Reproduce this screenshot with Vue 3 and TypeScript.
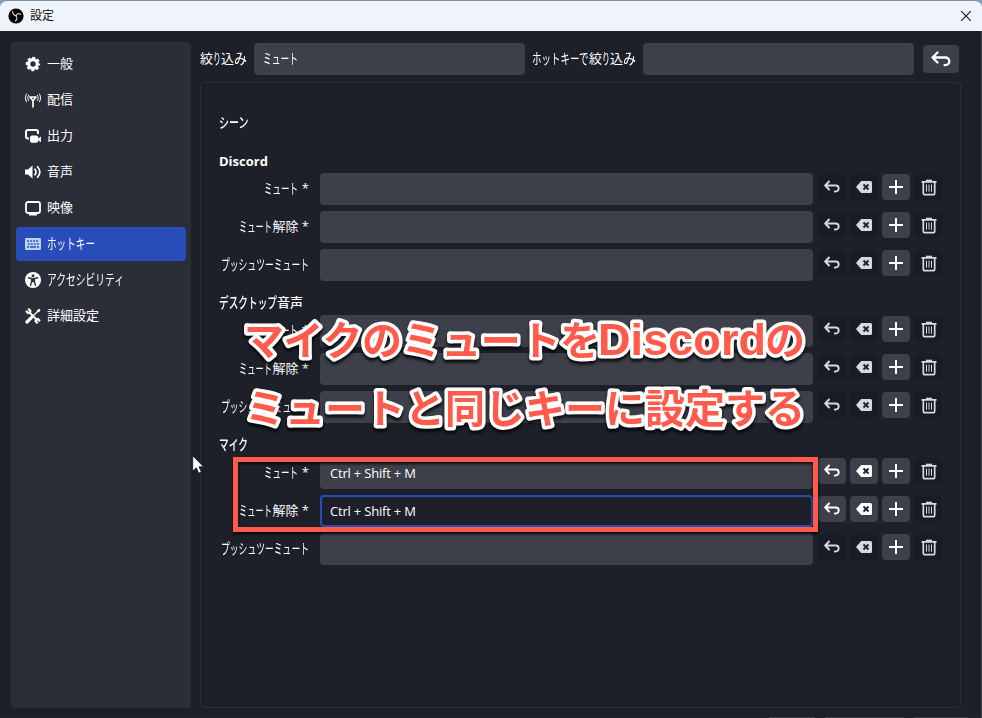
<script setup lang="ts">
import { defineComponent, h, type PropType } from 'vue'

// A run of text: with a width, the glyphs are condensed to fill exactly that width.
type Run = [text: string, width?: number]

const Condensed = defineComponent({
  props: {
    runs: { type: Array as PropType<Run[]>, required: true },
    size: { type: Number, default: 13 },
  },
  setup(props) {
    return () =>
      h(
        'span',
        { class: 'runs' },
        props.runs.map(([text, width]) =>
          width === undefined
            ? h('span', { class: 'run' }, text)
            : h('span', { class: 'run', style: { width: `${width}px` } }, [
                h(
                  'span',
                  { class: 'squeeze', style: { transform: `scale(${width / (text.length * props.size)}, 1.12)` } },
                  text,
                ),
              ]),
        ),
      )
  },
})

interface NavItem { icon: string; label: Run[]; active?: boolean }
const nav: NavItem[] = [
  { icon: 'gear', label: [['一般']] },
  { icon: 'antenna', label: [['配信']] },
  { icon: 'output', label: [['出力']] },
  { icon: 'audio', label: [['音声']] },
  { icon: 'video', label: [['映像']] },
  { icon: 'keyboard', label: [['ホットキー', 48]], active: true },
  { icon: 'access', label: [['アクセシビリティ', 78]] },
  { icon: 'tools', label: [['詳細設定']] },
]

interface Row { label: Run[]; value?: string; focused?: boolean }
interface Group { title: Run[]; rows: Row[] }
const mute: Run[] = [['ミュート', 34], ['\u00a0*']]
const unmute: Run[] = [['ミュート', 33], ['解除\u00a0*']]
const push: Run[] = [['プッシュツーミュート', 88]]

const groups: Group[] = [
  { title: [['Discord']], rows: [{ label: mute }, { label: unmute }, { label: push }] },
  { title: [['デスクトップ', 58], ['音声']], rows: [{ label: mute }, { label: unmute }, { label: push }] },
  {
    title: [['マイク', 29]],
    rows: [
      { label: mute, value: 'Ctrl + Shift + M' },
      { label: unmute, value: 'Ctrl + Shift + M', focused: true },
      { label: push },
    ],
  },
]
</script>

<template>
  <div class="window">
    <header class="titlebar">
      <svg class="logo" viewBox="0 0 16 16">
        <circle cx="8" cy="8" r="7.600" fill="#000" />
        <g fill="none" stroke="#d5d9e0" stroke-width="1.100" stroke-linecap="round">
          <path d="M4.600 3.200c.1 2.500 1.300 4.100 3.400 4.600" />
          <path d="M12.700 6.200c-2-1.200-3.700-.6-4.700 1.600" />
          <path d="M7.300 13c2-1.300 2.100-3.200.7-5.200" />
        </g>
      </svg>
      <span class="title">設定</span>
      <svg class="close" viewBox="0 0 12 12"><path d="M1.200 1.200l9.600 9.600M10.800 1.200l-9.600 9.600" /></svg>
    </header>

    <div class="body">
      <nav class="sidebar">
        <div v-for="item in nav" :key="item.icon" class="item" :class="{ active: item.active }">
          <svg class="nav-icon" viewBox="0 0 16 16">
            <g v-if="item.icon === 'gear'">
              <circle cx="8" cy="8" r="4.300" fill="none" stroke="#fff" stroke-width="3.200" />
              <circle cx="8" cy="8" r="6.100" fill="none" stroke="#fff" stroke-width="2.200" stroke-dasharray="2.800 1.990" stroke-dashoffset="1.400" />
            </g>
            <g v-else-if="item.icon === 'antenna'" fill="none" stroke="#fff" stroke-linecap="round">
              <path d="M5 5h6L8 8.800zM8 8.500v6.300" stroke-width="1.700" stroke-linejoin="round" />
              <path d="M3.600 3.200c-1.100 1.700-1.100 3.700 0 5.400M12.400 3.200c1.100 1.700 1.100 3.700 0 5.400M1.500 2C.1 4.500.1 7.300 1.500 9.800M14.500 2c1.400 2.500 1.400 5.300 0 7.800" stroke-width="1" />
            </g>
            <g v-else-if="item.icon === 'output'">
              <path d="M4 10.500H3A2 2 0 0 1 1 8.500V4a2 2 0 0 1 2-2h8a2 2 0 0 1 2 2v2" fill="none" stroke="#fff" stroke-width="2" />
              <rect x="5" y="7.500" width="8.200" height="7.300" rx="2" fill="#fff" />
              <path d="M12.500 11l3.500-2.500v5.800L12.500 12z" fill="#fff" />
            </g>
            <g v-else-if="item.icon === 'audio'">
              <path d="M0 5.500h3L7.500 1.500v13L3 10.500H0z" fill="#fff" />
              <path d="M10 5.200c1.300 1.800 1.300 3.800 0 5.600M12.500 2.800c2.900 3.200 2.900 7.200 0 10.400" fill="none" stroke="#fff" stroke-width="1.700" stroke-linecap="round" />
            </g>
            <g v-else-if="item.icon === 'video'">
              <rect x="1" y="2" width="14" height="11" rx="2" fill="none" stroke="#fff" stroke-width="1.800" />
              <path d="M4 14h8v1.500H4z" fill="#fff" />
            </g>
            <g v-else-if="item.icon === 'keyboard'">
              <rect x="0" y="2" width="16" height="12" rx="1" fill="#b9d3fb" />
              <path d="M2 5h12M3 8h11" fill="none" stroke="#284cb8" stroke-width="1.700" stroke-dasharray="1.800 1.200" />
              <path d="M2 11h2M5 11h6M12 11h2" fill="none" stroke="#284cb8" stroke-width="1.500" />
            </g>
            <g v-else-if="item.icon === 'access'">
              <circle cx="8" cy="8" r="8" fill="#fff" />
              <circle cx="8" cy="3.700" r="1.500" fill="#2b2d38" />
              <path d="M3.500 5.800L6.600 6.600v3L5.500 13.300M12.500 5.800L9.400 6.600v3l1.100 3.700" fill="none" stroke="#2b2d38" stroke-width="1.400" stroke-linecap="round" />
              <path d="M6.200 6h3.600v4.200H6.200z" fill="#2b2d38" />
            </g>
            <g v-else fill="none" stroke="#fff">
              <path d="M4.500 4.500l8 8" stroke-width="2" />
              <path d="M1 2.900l2.200 2.100 1.800-.400.400-1.800L3.300.7M15 13.100l-2.200-2.100-1.800.400-.400 1.800 2.100 2.100" stroke-width="2.200" />
              <path d="M14.800 1.200L6.500 9.500" stroke-width="1.300" />
              <path d="M13.600 1.200l1.500 1.500-1.600 1.200-1-1z" fill="#fff" stroke-width=".8" />
              <path d="M6.600 9.400L2 14" stroke-width="3.200" stroke-linecap="round" />
            </g>
          </svg>
          <Condensed :runs="item.label" />
        </div>
      </nav>

      <main class="content">
        <div class="filters">
          <Condensed class="f1" :runs="[['絞'], ['り', 8], ['込'], ['み', 13]]" />
          <div class="field"><Condensed :runs="[['ミュート', 35]]" /></div>
          <Condensed class="f2" :runs="[['ホットキーで', 57], ['絞'], ['り', 8], ['込'], ['み', 13]]" />
          <div class="field"></div>
          <button class="reset">
            <svg viewBox="0 0 20 16"><path d="M6.500 1.500L1.500 6.500l5 5M2 6.500h12.500a3.800 3.800 0 0 1 0 7.600H13.500" /></svg>
          </button>
        </div>

        <section class="panel">
          <h2 class="scene"><Condensed :runs="[['シーン', 30]]" /></h2>
          <div v-for="(group, g) in groups" :key="g" class="group">
            <h3><Condensed :runs="group.title" /></h3>
            <div v-for="(row, r) in group.rows" :key="r" class="row">
              <Condensed class="label" :runs="row.label" />
              <div class="key" :class="{ focused: row.focused }">{{ row.value }}</div>
              <div class="actions">
                <button :class="{ off: !row.value }">
                  <svg viewBox="0 0 16 16"><path class="line" d="M5 2.500L1.200 6.500 5 10.500M1.500 6.500h10.200a3 3 0 0 1 0 6H10.800" /></svg>
                </button>
                <button :class="{ off: !row.value }">
                  <svg viewBox="0 0 16 16">
                    <path class="solid" d="M5.200 2H14.500a1.500 1.500 0 0 1 1.500 1.500v9a1.500 1.500 0 0 1-1.500 1.500H5.200L0 8z" />
                    <path class="cross" d="M7.500 5.500l5 5M12.500 5.500l-5 5" />
                  </svg>
                </button>
                <button>
                  <svg viewBox="0 0 16 16"><path class="line square" d="M8 1v14M1 8h14" /></svg>
                </button>
                <button class="off">
                  <svg class="bin" viewBox="0 0 16 16">
                    <path class="line trash" d="M.5 2.400h15M2.300 3v10.500a1.700 1.700 0 0 0 1.700 1.700h8a1.700 1.700 0 0 0 1.700-1.700V3" />
                    <path class="solid" d="M5 .2h6v2H5z" />
                    <path class="line ribs" d="M5.500 5v7.200M8 5v7.200M10.500 5v7.200" />
                  </svg>
                </button>
              </div>
            </div>
          </div>
        </section>
      </main>
    </div>

    <footer class="bottom"><i class="b1"></i><i class="b2"></i><i class="b3"></i></footer>

    <div class="edge"></div>
    <div class="highlight"></div>
    <svg class="caption" viewBox="0 0 982 718">
      <text x="244" y="355" textLength="356">マイクのミュートを</text>
      <text class="latin" x="598" y="355" textLength="168">Discord</text>
      <text x="765" y="355">の</text>
      <text x="245" y="422.500" textLength="560">ミュートと同じキーに設定する</text>
    </svg>
    <svg class="cursor" viewBox="0 0 12 19">
      <path d="M.7.8v15.400l3.600-3.400 2.400 5.400 2.700-1.200-2.400-5.200h4.600z" />
    </svg>
  </div>
</template>

<style>
body { margin: 0; overflow: hidden; }
.runs { display: inline-flex; align-items: center; padding-bottom: 1.5px; white-space: nowrap; }
.run { display: block; flex: none; }
.squeeze { display: block; width: max-content; transform-origin: 0 50%; }
</style>

<style scoped>
.window {
  position: relative;
  display: flex;
  flex-direction: column;
  box-sizing: border-box;
  width: 982px;
  height: 718px;
  overflow: hidden;
  background: linear-gradient(#7f9fc0 8px, #1e2029 8px);
  color: #fff;
  font: 13px/18px 'Open Sans', 'Noto Sans CJK JP', sans-serif;
}
.titlebar {
  display: flex;
  align-items: center;
  box-sizing: border-box;
  height: 31px;
  padding: 0 10px 0 8px;
  border-top: 1px solid #7b8fa8;
  border-radius: 7px 7px 0 0;
  background: #eff3fa;
  color: #111;
}
.logo { width: 16px; height: 16px; margin-right: 6px; }
.title { font-size: 12px; }
.close { width: 12px; height: 12px; margin-left: auto; fill: none; stroke: #111; stroke-width: 1.1; }
.body { display: flex; flex: 1; gap: 9px; padding: 11px 21px 9px 11px; }
.sidebar {
  display: flex;
  flex-direction: column;
  gap: 2px;
  box-sizing: border-box;
  width: 180px;
  padding: 5px;
  border-radius: 4px;
  background: #2b2d38;
}
.item { display: flex; align-items: center; gap: 6px; height: 34px; padding-left: 9px; border-radius: 4px; }
.item.active { background: #284cb8; }
.nav-icon { width: 16px; height: 16px; }
.content { display: flex; flex: 1; flex-direction: column; }
.filters { display: flex; align-items: center; height: 32px; margin: 1px 0 7px; }
.f1 { width: 54px; }
.f2 { width: 111px; margin-left: 7px; }
.field {
  display: flex;
  align-items: center;
  box-sizing: border-box;
  width: 271px;
  height: 32px;
  padding-left: 9px;
  border-radius: 4px;
  background: #3d404a;
}
button {
  display: flex;
  align-items: center;
  justify-content: center;
  width: 28px;
  height: 26px;
  padding: 0;
  border: 0;
  border-radius: 4px;
  background: #3d404a;
  color: #fff;
}
.reset { width: 36px; height: 28px; margin-left: 9px; }
.reset svg { width: 20px; height: 16px; fill: none; stroke: #fff; stroke-width: 2.3; stroke-linecap: round; stroke-linejoin: round; }
.panel { flex: 1; box-sizing: border-box; padding: 28px 18px 0; border: 1px solid #2b2d38; border-radius: 4px; }
h2, h3 { display: flex; align-items: center; margin: 0; font-size: 13px; font-weight: 700; }
.scene { height: 24px; margin-bottom: 10px; font-weight: 500; }
.group h3 { box-sizing: border-box; height: 28px; padding-top: 5px; }
.group + .group h3 { padding-top: 4px; font-weight: 500; }
.row { display: flex; height: 32px; margin-bottom: 6px; }
.label { justify-content: flex-end; width: 90px; margin-right: 11px; }
.key {
  box-sizing: border-box;
  width: 493px;
  height: 32px;
  padding: 6px 8px;
  border: 2px solid #3d404a;
  border-radius: 4px;
  background: #3d404a;
  line-height: 17px;
  letter-spacing: -0.2px;
}
.key.focused { border-color: #284cb8; background: #1e2029; }
.actions { display: flex; gap: 4px; margin: 1px 0 0 5px; }
.actions button.off { background: #191b26; color: #d5d9e5; }
.actions svg { width: 16px; height: 16px; }
.actions .bin { width: 16px; height: 17px; margin-left: 1px; }
.line { fill: none; stroke: currentColor; stroke-width: 1.9; stroke-linecap: round; stroke-linejoin: round; }
.square { stroke-width: 2; stroke-linecap: butt; }
.trash { stroke-width: 1.7; stroke-linecap: butt; }
.ribs { stroke-width: 1; stroke-linecap: butt; }
.solid { fill: currentColor; }
.cross { stroke: #20222c; stroke-width: 1.9; }
.bottom { display: flex; justify-content: flex-end; gap: 10px; height: 1px; padding-right: 14px; background: #29232e; }
.bottom i { background: #3d404a; }
.b1 { width: 46px; }
.b2 { width: 79px; }
.b3 { width: 54px; }
.edge { position: absolute; top: 31px; right: 0; width: 1px; height: 687px; background: #44454a; }
.highlight {
  position: absolute;
  left: 233px;
  top: 457px;
  box-sizing: border-box;
  width: 585px;
  height: 75px;
  border: 5px solid #ff5a4b;
  filter: drop-shadow(0 2px 1.5px rgba(0, 0, 0, 0.8));
}
.caption {
  position: absolute;
  inset: 0;
  width: 982px;
  height: 718px;
  fill: #ff5a4b;
  stroke: #fff;
  stroke-width: 7px;
  stroke-linejoin: round;
  paint-order: stroke;
  font: 700 40px 'Noto Sans CJK JP', sans-serif;
  filter: drop-shadow(0 3px 1.5px rgba(0, 0, 0, 0.8));
}
.latin { font: 700 45px 'Liberation Sans', sans-serif; }
.cursor { position: absolute; left: 192px; top: 455px; width: 12px; height: 19px; fill: #fff; stroke: #111; stroke-width: 0.8; }
</style>
